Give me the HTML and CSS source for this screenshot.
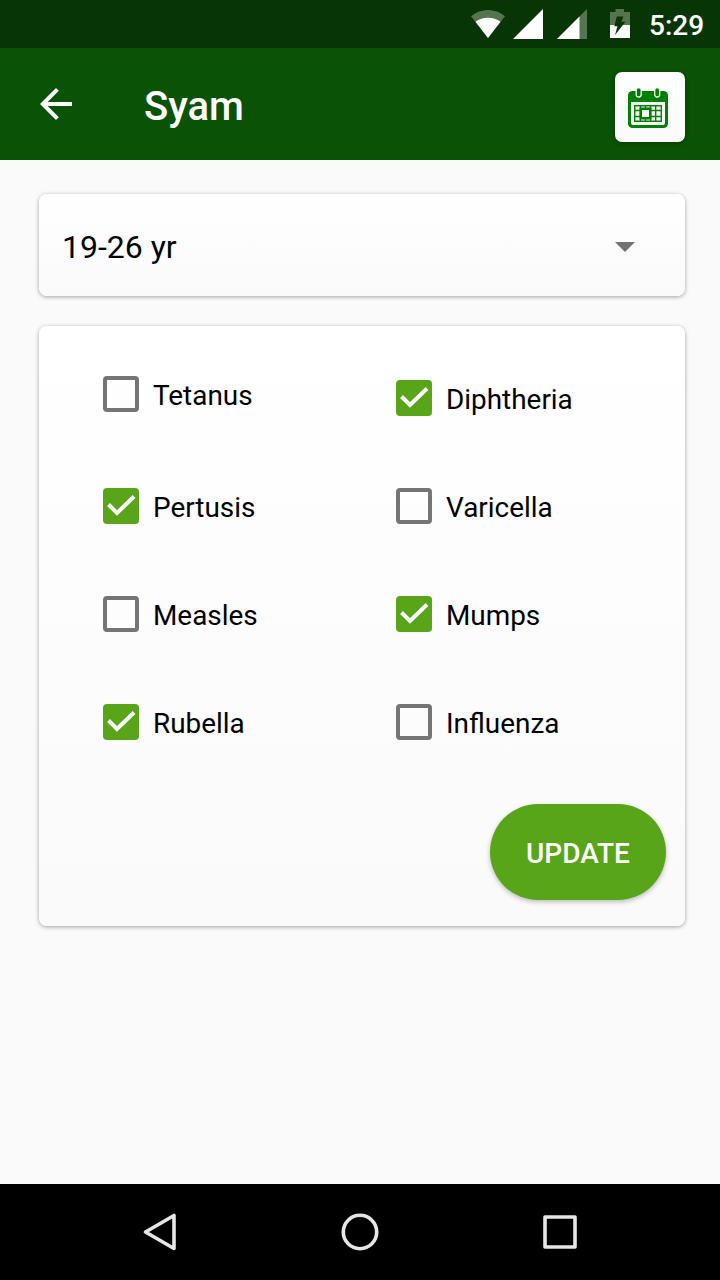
FILE: index.html
```html
<!DOCTYPE html>
<html lang="en">
<head>
<meta charset="utf-8">
<title>Syam</title>
<link rel="stylesheet" href="styles.css">
</head>
<body>
<div class="screen">
  <div class="status">
    <svg class="wifi" width="34" height="28" viewBox="0 0 34 28"><path fill="#557551" d="M0 6.3C10-2.1 24-2.1 34 6.3L17 28z"/><path fill="#fff" d="M4.5 11.8C11.500 6.300 22.500 6.300 29.500 11.800L17 28z"/></svg>
    <svg class="signal" width="30" height="30" viewBox="0 0 30 30"><path fill="#fff" d="M30 0V30H0z"/></svg>
    <svg class="signal-two" width="30" height="30" viewBox="0 0 30 30"><path fill="#557551" d="M30 0V30H0z"/><path fill="#fff" d="M22.5 7.5V30H0z"/></svg>
    <svg class="battery" width="20" height="29" viewBox="0 0 20 29"><path fill="#557551" d="M0 3H5.5V0H14V3H20V16H0z"/><path fill="#fff" d="M0 16H20V29H0z"/><path fill="#083505" d="M6.800 7.500H13.500L11.300 12.800H15.500L5 26L7.500 17.200H4.300z"/></svg>
    <span class="clock">5:29</span>
  </div>
  <header class="toolbar">
    <svg class="back" width="32" height="32" viewBox="0 0 32 32"><path fill="none" stroke="#fff" stroke-width="4" d="M32 16H3M17.4 1.4L2.8 16L17.4 30.6"/></svg>
    <h1 class="title">Syam</h1>
    <div class="calendar">
      <svg width="40" height="40" viewBox="0 0 40 40">
        <rect x="0" y="3" width="40" height="37" rx="4.500" fill="#008000"/>
        <path fill="#fdfdfd" d="M3 14H37V34.500Q37 37 34.500 37H5.500Q3 37 3 34.500z"/>
        <g fill="#008000" stroke="#fdfdfd" stroke-width="1.300"><rect x="8.200" y="-.5" width="5" height="9.500" rx="2.500"/><rect x="26.700" y="-.5" width="5" height="9.500" rx="2.500"/></g>
        <path fill="none" stroke="#008000" stroke-width="1.400" d="M6.700 17.700H33.300V33.300H6.700zM6.700 22.500H33.300M6.700 28.500H33.300M12.500 17.700V33.300M17.500 17.700V33.300M22.500 17.700V33.300M27.700 17.700V33.300"/>
        <rect x="12.700" y="20.800" width="9.600" height="9.400" fill="#fdfdfd" stroke="#008000" stroke-width="2.600"/>
      </svg>
    </div>
  </header>
  <main class="content">
    <div class="card picker"><span>19-26 yr</span><svg width="20" height="10" viewBox="0 0 20 10"><path fill="#737373" d="M0 0H20L10 10z"/></svg></div>
    <section class="card panel">
      <div class="choices">
        <label class="choice"><span class="box"></span><span class="name">Tetanus</span></label>
        <label class="choice lower"><span class="box on"><svg viewBox="0 0 36 36"><path d="M5.500 16.500L14 25L31 8.500"/></svg></span><span class="name">Diphtheria</span></label>
        <label class="choice"><span class="box on"><svg viewBox="0 0 36 36"><path d="M5.500 16.500L14 25L31 8.500"/></svg></span><span class="name">Pertusis</span></label>
        <label class="choice"><span class="box"></span><span class="name">Varicella</span></label>
        <label class="choice"><span class="box"></span><span class="name">Measles</span></label>
        <label class="choice"><span class="box on"><svg viewBox="0 0 36 36"><path d="M5.500 16.500L14 25L31 8.500"/></svg></span><span class="name">Mumps</span></label>
        <label class="choice"><span class="box on"><svg viewBox="0 0 36 36"><path d="M5.500 16.500L14 25L31 8.500"/></svg></span><span class="name">Rubella</span></label>
        <label class="choice"><span class="box"></span><span class="name">Influenza</span></label>
      </div>
      <button class="update">UPDATE</button>
    </section>
  </main>
  <nav class="navbar">
    <svg width="40" height="40" viewBox="0 0 40 40"><path d="M5.500 20L34 3.500V36.500z"/></svg>
    <svg width="40" height="40" viewBox="0 0 40 40"><circle cx="20" cy="20" r="16.700"/></svg>
    <svg width="40" height="40" viewBox="0 0 40 40"><rect x="5" y="5" width="30" height="30"/></svg>
  </nav>
</div>
</body>
</html>
```
FILE: styles.css
```css
* { box-sizing: border-box; }
body { margin: 0; font-family: Roboto, sans-serif; color: #000; }
svg { display: block; flex: none; }
.screen { width: 720px; height: 1280px; display: flex; flex-direction: column; background: #fafafa; overflow: hidden; }
.status { height: 48px; flex: none; display: flex; align-items: flex-start; background: #083505; padding-left: 471px; color: #fff; }
.wifi { margin-top: 10px; }
.signal { margin: 9px 0 0 8px; }
.signal-two { margin: 9px 0 0 14px; }
.battery { margin: 9px 0 0 23px; }
.clock { margin-left: 19px; font-size: 28px; font-weight: 500; line-height: 52px; }
.toolbar { height: 112px; flex: none; display: flex; align-items: center; background: #0a5205; padding: 0 35px 0 40px; color: #fff; }
.title { margin: 6px 0 0 72px; font-size: 40px; font-weight: 500; line-height: 48px; }
.calendar { width: 70px; height: 70px; margin: 6px 0 0 auto; display: flex; align-items: center; justify-content: center; padding: 2px 4px 0 0; border-radius: 7px; background: linear-gradient(#fff, #fafafa); box-shadow: 0 1px 5px rgba(0,0,0,.3); }
.content { flex: 1; padding: 34px 35px 0 39px; }
.card { border-radius: 8px; background: linear-gradient(#fff, #fafafa); box-shadow: 0 1px 4px rgba(0,0,0,.36); }
.picker { height: 102px; display: flex; align-items: center; justify-content: space-between; padding: 4px 50px 0 23px; font-size: 32px; }
.panel { height: 600px; margin-top: 30px; display: flex; flex-direction: column; padding: 50px 19px 26px 64px; }
.choices { display: grid; grid-template-columns: 293px 1fr; grid-template-rows: 112px 108px 108px 36px; align-items: start; }
.choice { display: flex; align-items: flex-start; gap: 14px; height: 36px; font-size: 27.9px; line-height: 36px; white-space: nowrap; }
.name { margin-top: 2px; }
.lower { margin-top: 4px; }
.box { width: 36px; height: 36px; flex: none; border: 4px solid #757575; border-radius: 4px; }
.on { border: 0; background: #58a51a; }
.on path { fill: none; stroke: #fff; stroke-width: 4; }
.update { width: 176px; height: 96px; margin: auto 0 0 auto; padding: 2px 0 0; border: 0; border-radius: 48px; background: #58a51a; color: #fff; font: 500 28px Roboto, sans-serif; box-shadow: 0 2px 5px rgba(0,0,0,.25); }
.navbar { height: 96px; flex: none; display: flex; gap: 160px; align-items: center; justify-content: center; background: #000; }
.navbar svg { fill: none; stroke: #e6e6e6; stroke-width: 3.6; stroke-linejoin: round; }
```
